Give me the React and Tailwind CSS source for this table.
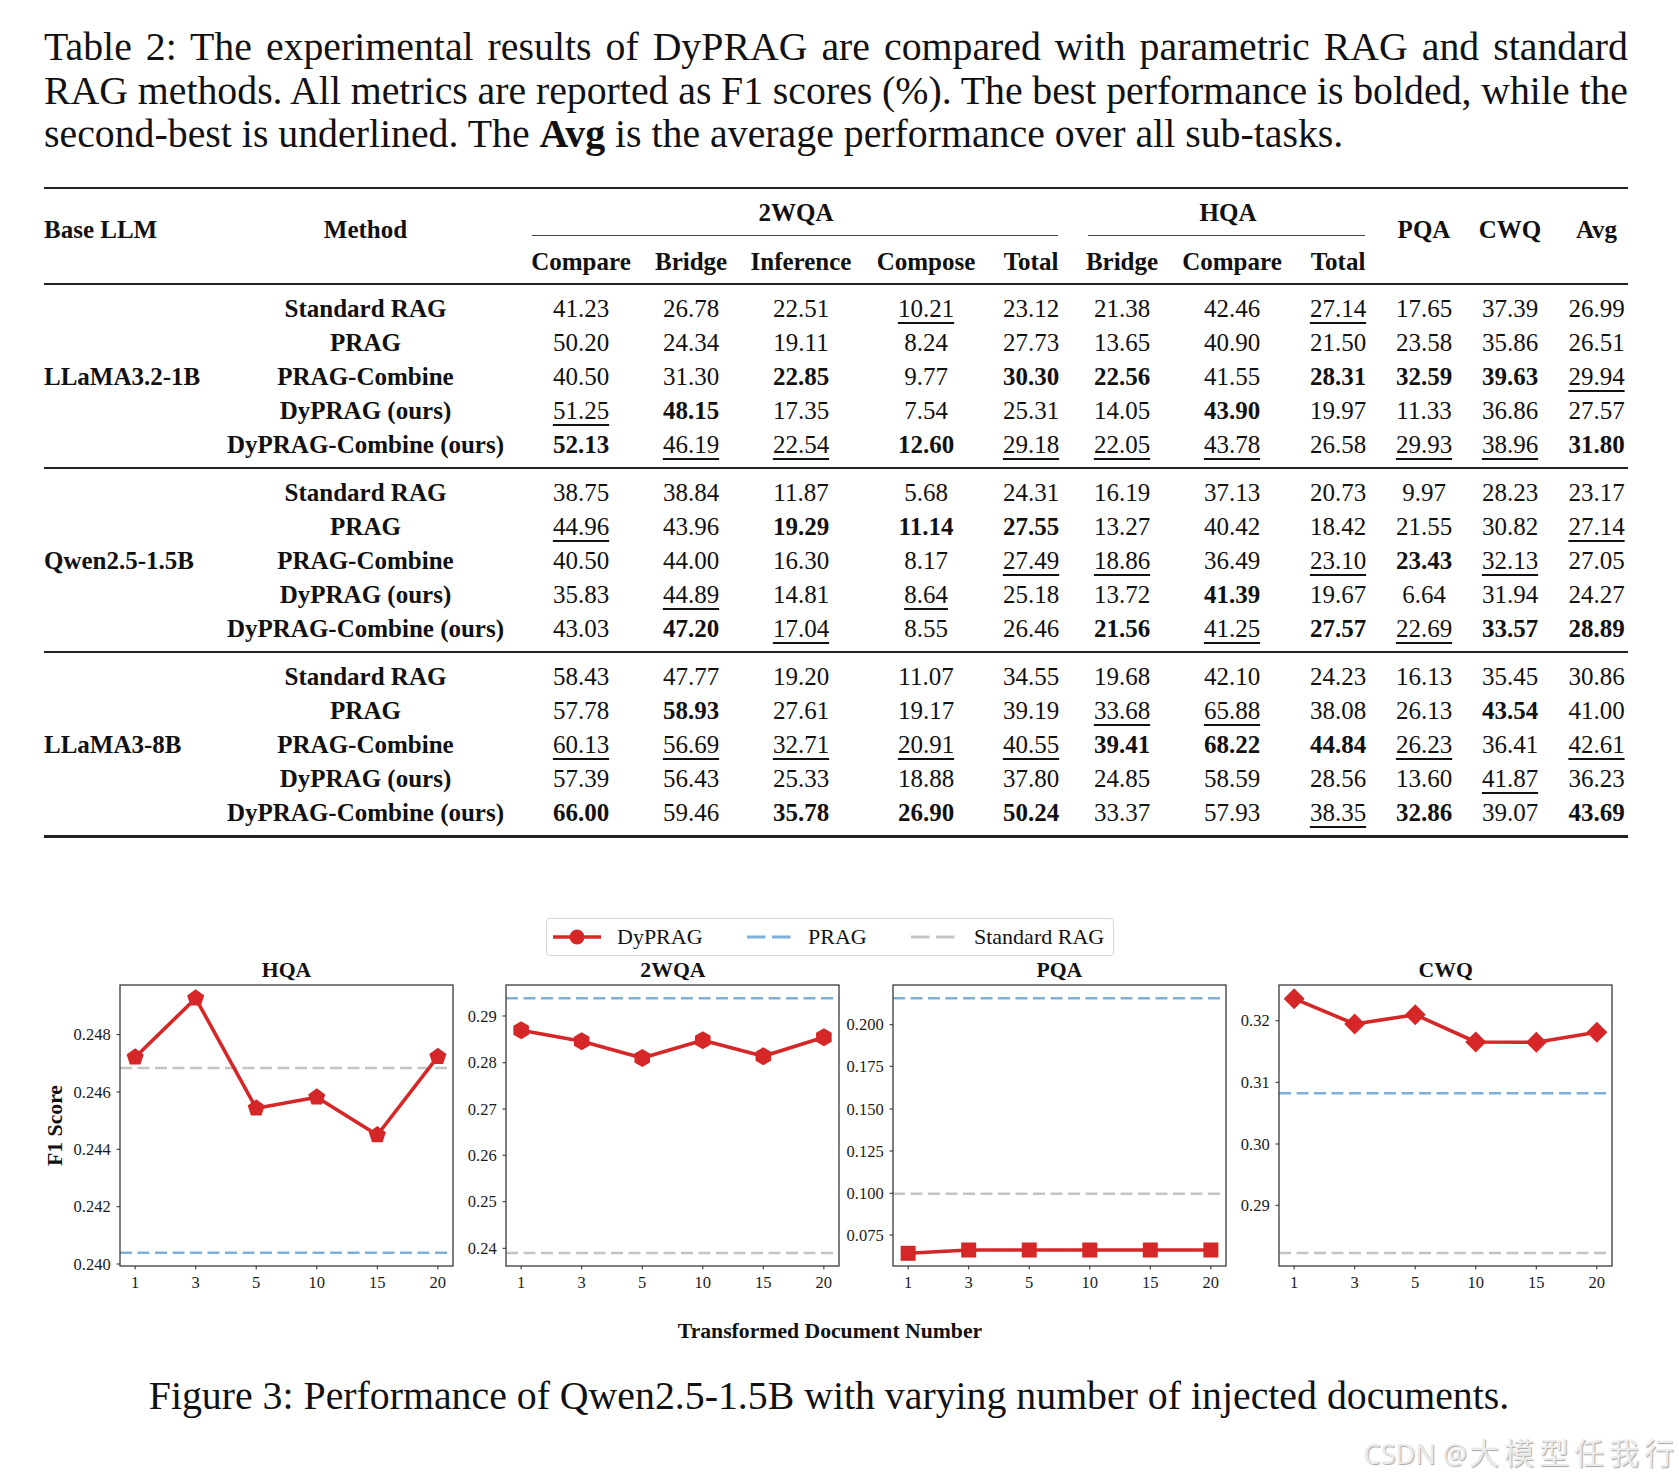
import React from 'react';

// column widths chained so each column's centre sits where the paper's does
const COLS = 'grid grid-cols-[180px_283px_148px_72px_148px_102px_108px_74px_146px_66px_106px_66px_107px]';

const groups = [
  {
    llm: 'LLaMA3.2-1B',
    rows: [
      ['Standard RAG', '41.23 26.78 22.51 _10.21 23.12 21.38 42.46 _27.14 17.65 37.39 26.99'],
      ['PRAG', '50.20 24.34 19.11 8.24 27.73 13.65 40.90 21.50 23.58 35.86 26.51'],
      ['PRAG-Combine', '40.50 31.30 *22.85 9.77 *30.30 *22.56 41.55 *28.31 *32.59 *39.63 _29.94'],
      ['DyPRAG (ours)', '_51.25 *48.15 17.35 7.54 25.31 14.05 *43.90 19.97 11.33 36.86 27.57'],
      ['DyPRAG-Combine (ours)', '*52.13 _46.19 _22.54 *12.60 _29.18 _22.05 _43.78 26.58 _29.93 _38.96 *31.80'],
    ],
  },
  {
    llm: 'Qwen2.5-1.5B',
    rows: [
      ['Standard RAG', '38.75 38.84 11.87 5.68 24.31 16.19 37.13 20.73 9.97 28.23 23.17'],
      ['PRAG', '_44.96 43.96 *19.29 *11.14 *27.55 13.27 40.42 18.42 21.55 30.82 _27.14'],
      ['PRAG-Combine', '40.50 44.00 16.30 8.17 _27.49 _18.86 36.49 _23.10 *23.43 _32.13 27.05'],
      ['DyPRAG (ours)', '35.83 _44.89 14.81 _8.64 25.18 13.72 *41.39 19.67 6.64 31.94 24.27'],
      ['DyPRAG-Combine (ours)', '43.03 *47.20 _17.04 8.55 26.46 *21.56 _41.25 *27.57 _22.69 *33.57 *28.89'],
    ],
  },
  {
    llm: 'LLaMA3-8B',
    rows: [
      ['Standard RAG', '58.43 47.77 19.20 11.07 34.55 19.68 42.10 24.23 16.13 35.45 30.86'],
      ['PRAG', '57.78 *58.93 27.61 19.17 39.19 _33.68 _65.88 38.08 26.13 *43.54 41.00'],
      ['PRAG-Combine', '_60.13 _56.69 _32.71 _20.91 _40.55 *39.41 *68.22 *44.84 _26.23 36.41 _42.61'],
      ['DyPRAG (ours)', '57.39 56.43 25.33 18.88 37.80 24.85 58.59 28.56 13.60 _41.87 36.23'],
      ['DyPRAG-Combine (ours)', '*66.00 59.46 *35.78 *26.90 *50.24 33.37 57.93 _38.35 *32.86 39.07 *43.69'],
    ],
  },
];

const plots = [
  {
    title: 'HQA', marker: 'p',
    yTicks: [['0.248', 49.6], ['0.246', 107], ['0.244', 164.3], ['0.242', 221.7], ['0.240', 279]],
    data: [72.3, 13.3, 123.3, 112.3, 150, 71.7], blue: 267.7, gray: 83,
  },
  {
    title: '2WQA', marker: 'h',
    yTicks: [['0.29', 31], ['0.28', 77.7], ['0.27', 124], ['0.26', 170.3], ['0.25', 216.7], ['0.24', 263.3]],
    data: [45.3, 56.3, 73, 55.3, 71.3, 52.3], blue: 13.3, gray: 268,
  },
  {
    title: 'PQA', marker: 's',
    yTicks: [['0.200', 39.7], ['0.175', 81.3], ['0.150', 124], ['0.125', 166], ['0.100', 208.3], ['0.075', 250]],
    data: [268.3, 265, 265, 265, 265, 265], blue: 13.3, gray: 208.7,
  },
  {
    title: 'CWQ', marker: 'D',
    yTicks: [['0.32', 35.7], ['0.31', 97.3], ['0.30', 159], ['0.29', 220.3]],
    data: [13.7, 39, 29.7, 57, 57.3, 47.3], blue: 108.3, gray: 268,
  },
];

const RED = '#d62728';
const BLUE = '#7eb0da';
const GRAY = '#c4c4c4';
const XLABELS = ['1', '3', '5', '10', '15', '20'];

const Value = ({ v }) => {
  if (v[0] === '*') return <span className="font-bold">{v.slice(1)}</span>;
  if (v[0] === '_')
    return <span className="underline decoration-[1.5px] underline-offset-[5px]">{v.slice(1)}</span>;
  return <span>{v}</span>;
};

const Rule = ({ h = 'h-[2px]' }) => <div className={`${h} bg-[#222]`} />;

function Marker({ type, x, y }) {
  if (type === 's') return <rect x={x - 7.5} y={y - 7.5} width={15} height={15} fill={RED} />;
  if (type === 'D')
    return <polygon points={`${x},${y - 10.5} ${x + 10.5},${y} ${x},${y + 10.5} ${x - 10.5},${y}`} fill={RED} />;
  const n = type === 'p' ? 5 : 6;
  const r = 9;
  const pts = Array.from({ length: n }, (_, k) => {
    const a = ((-90 + (k * 360) / n) * Math.PI) / 180;
    return `${(x + r * Math.cos(a)).toFixed(2)},${(y + r * Math.sin(a)).toFixed(2)}`;
  }).join(' ');
  return <polygon points={pts} fill={RED} />;
}

function Subplot({ p, idx }) {
  const L = 53, T = 3, W = 333, H = 281;
  const xs = XLABELS.map((_, i) => L + ((0.25 + i) / 5.5) * W);
  const clip = `clip-${idx}`;
  return (
    <div className="w-[386.4px] shrink-0 flex flex-col">
      <div className="ml-[53px] w-[333px] h-[24px] text-center text-[21.7px] leading-[24px] font-bold">{p.title}</div>
      <svg width="386.4" height="312" className="block overflow-visible">
        <defs>
          <clipPath id={clip}>
            <rect x={L} y={T} width={W} height={H} />
          </clipPath>
        </defs>
        <g clipPath={`url(#${clip})`}>
          <line x1={L} x2={L + W} y1={T + p.blue} y2={T + p.blue} stroke={BLUE} strokeWidth="2.5" strokeDasharray="12 5.5" />
          <line x1={L} x2={L + W} y1={T + p.gray} y2={T + p.gray} stroke={GRAY} strokeWidth="2.5" strokeDasharray="12 5.5" />
        </g>
        <polyline
          points={p.data.map((y, i) => `${xs[i].toFixed(2)},${T + y}`).join(' ')}
          fill="none" stroke={RED} strokeWidth="3.6" strokeLinejoin="round"
        />
        {p.data.map((y, i) => <Marker key={i} type={p.marker} x={xs[i]} y={T + y} />)}
        <rect x={L} y={T} width={W} height={H} fill="none" stroke="#3a3a3a" strokeWidth="1.3" />
        {p.yTicks.map(([lab, y]) => (
          <g key={lab}>
            <line x1={L - 3.5} x2={L} y1={T + y} y2={T + y} stroke="#3a3a3a" strokeWidth="1.1" />
            <text x={L - 9.3} y={T + y + 5.6} textAnchor="end" fontSize="16.5" fill="#1a1a1a" fontFamily="'Liberation Serif', serif">{lab}</text>
          </g>
        ))}
        {xs.map((x, i) => (
          <g key={i}>
            <line x1={x} x2={x} y1={T + H} y2={T + H + 3.5} stroke="#3a3a3a" strokeWidth="1.1" />
            <text x={x} y={305.5} textAnchor="middle" fontSize="16.5" fill="#1a1a1a" fontFamily="'Liberation Serif', serif">{XLABELS[i]}</text>
          </g>
        ))}
      </svg>
    </div>
  );
}

const Dash = ({ color }) => (
  <svg width="44" height="20" className="block">
    <line x1="0" x2="44" y1="10" y2="10" stroke={color} strokeWidth="3" strokeDasharray="18.5 6.5" />
  </svg>
);

export default function App() {
  return (
    <div className="relative w-[1679px] min-h-[1483px] bg-white text-[#111] [font-family:'Liberation_Serif',serif]">
      {/* table caption */}
      <div className="ml-[44px] w-[1584px] pt-[26px] text-[39.8px] leading-[43.5px]">
        <div className="whitespace-nowrap text-justify [text-align-last:justify] [word-spacing:-3px]">
          Table 2: The experimental results of DyPRAG are compared with parametric RAG and standard
        </div>
        <div className="whitespace-nowrap text-justify [text-align-last:justify] [word-spacing:-3px]">
          RAG methods. All metrics are reported as F1 scores (%). The best performance is bolded, while the
        </div>
        <div className="whitespace-nowrap">
          second-best is underlined. The <span className="font-bold">Avg</span> is the average performance over all sub-tasks.
        </div>
      </div>

      {/* table */}
      <div className="ml-[44px] w-[1584px] mt-[30.5px] text-[25px]">
        <Rule />
        <div className={`${COLS} grid-rows-[47px_47px] font-bold`}>
          <div className="row-span-2 pt-[24px] leading-[34px] text-left whitespace-nowrap">Base LLM</div>
          <div className="row-span-2 pt-[24px] leading-[34px] text-center">Method</div>
          <div className="col-span-5 flex flex-col">
            <div className="h-[46px] leading-[48px] text-center">2WQA</div>
            <div className="h-px bg-[#444] ml-[25px] mr-[27px]" />
          </div>
          <div className="col-span-3 flex flex-col">
            <div className="h-[46px] leading-[48px] text-center">HQA</div>
            <div className="h-px bg-[#444] ml-[3px] mr-[6px]" />
          </div>
          <div className="row-span-2 pt-[24px] leading-[34px] text-center">PQA</div>
          <div className="row-span-2 pt-[24px] leading-[34px] text-center">CWQ</div>
          <div className="row-span-2 pt-[24px] leading-[34px] text-center">Avg</div>
          {['Compare', 'Bridge', 'Inference', 'Compose', 'Total', 'Bridge', 'Compare', 'Total'].map((h, i) => (
            <div key={i} className="pt-[2px] leading-[47px] text-center whitespace-nowrap">{h}</div>
          ))}
        </div>
        <Rule />
        {groups.map((g, gi) => (
          <React.Fragment key={g.llm}>
            <div className={`${COLS} grid-rows-[repeat(5,34px)] pt-[7px] pb-[5px] leading-[34px]`}>
              <div className="row-span-5 self-center font-bold whitespace-nowrap">{g.llm}</div>
              {g.rows.map(([method, vals]) => (
                <React.Fragment key={method}>
                  <div className="text-center font-bold whitespace-nowrap">{method}</div>
                  {vals.split(' ').map((v, i) => (
                    <div key={i} className="text-center whitespace-nowrap">
                      <Value v={v} />
                    </div>
                  ))}
                </React.Fragment>
              ))}
            </div>
            <Rule h={gi === groups.length - 1 ? 'h-[2.5px]' : 'h-[2px]'} />
          </React.Fragment>
        ))}
      </div>

      {/* figure legend */}
      <div className="mt-[80px] ml-[546px] w-[568px] h-[38px] rounded-[4px] border border-[#d6d6d6] flex items-center pl-[6px] text-[22px] leading-[24px]">
        <svg width="48" height="20" className="block">
          <line x1="0" x2="48" y1="10" y2="10" stroke={RED} strokeWidth="3.5" />
          <circle cx="24" cy="10" r="7.5" fill={RED} />
        </svg>
        <span className="ml-[16px] w-[130px]">DyPRAG</span>
        <Dash color={BLUE} />
        <span className="ml-[17px] w-[103px]">PRAG</span>
        <Dash color={GRAY} />
        <span className="ml-[19px] whitespace-nowrap">Standard RAG</span>
      </div>

      {/* subplots */}
      <div className="mt-[2px] ml-[44px] flex">
        <div className="w-[23px] shrink-0 pt-[27px]">
          <div className="h-[281px] flex items-center justify-center">
            <span className="[writing-mode:vertical-rl] rotate-180 font-bold text-[21.7px] leading-[23px] whitespace-nowrap">F1 Score</span>
          </div>
        </div>
        {plots.map((p, i) => (
          <Subplot key={p.title} p={p} idx={i} />
        ))}
      </div>

      <div className="mt-[24px] w-[1660px] text-center font-bold text-[21.7px] leading-[26px]">Transformed Document Number</div>

      <div className="mt-[31px] w-[1658px] text-center text-[39.8px] leading-[43px]">
        Figure 3: Performance of Qwen2.5-1.5B with varying number of injected documents.
      </div>

      <div className="mt-[15px] w-[1679px] flex justify-end items-baseline whitespace-nowrap leading-[40px] text-[#ebebeb] [text-shadow:1px_1px_1px_#a8a8a8] [font-family:'Noto_Sans','Noto_Sans_CJK_SC',sans-serif]">
        <span className="text-[27px]">CSDN @</span>
        <span className="ml-[2px] text-[30px] tracking-[5px]">大模型任我行</span>
      </div>
    </div>
  );
}
